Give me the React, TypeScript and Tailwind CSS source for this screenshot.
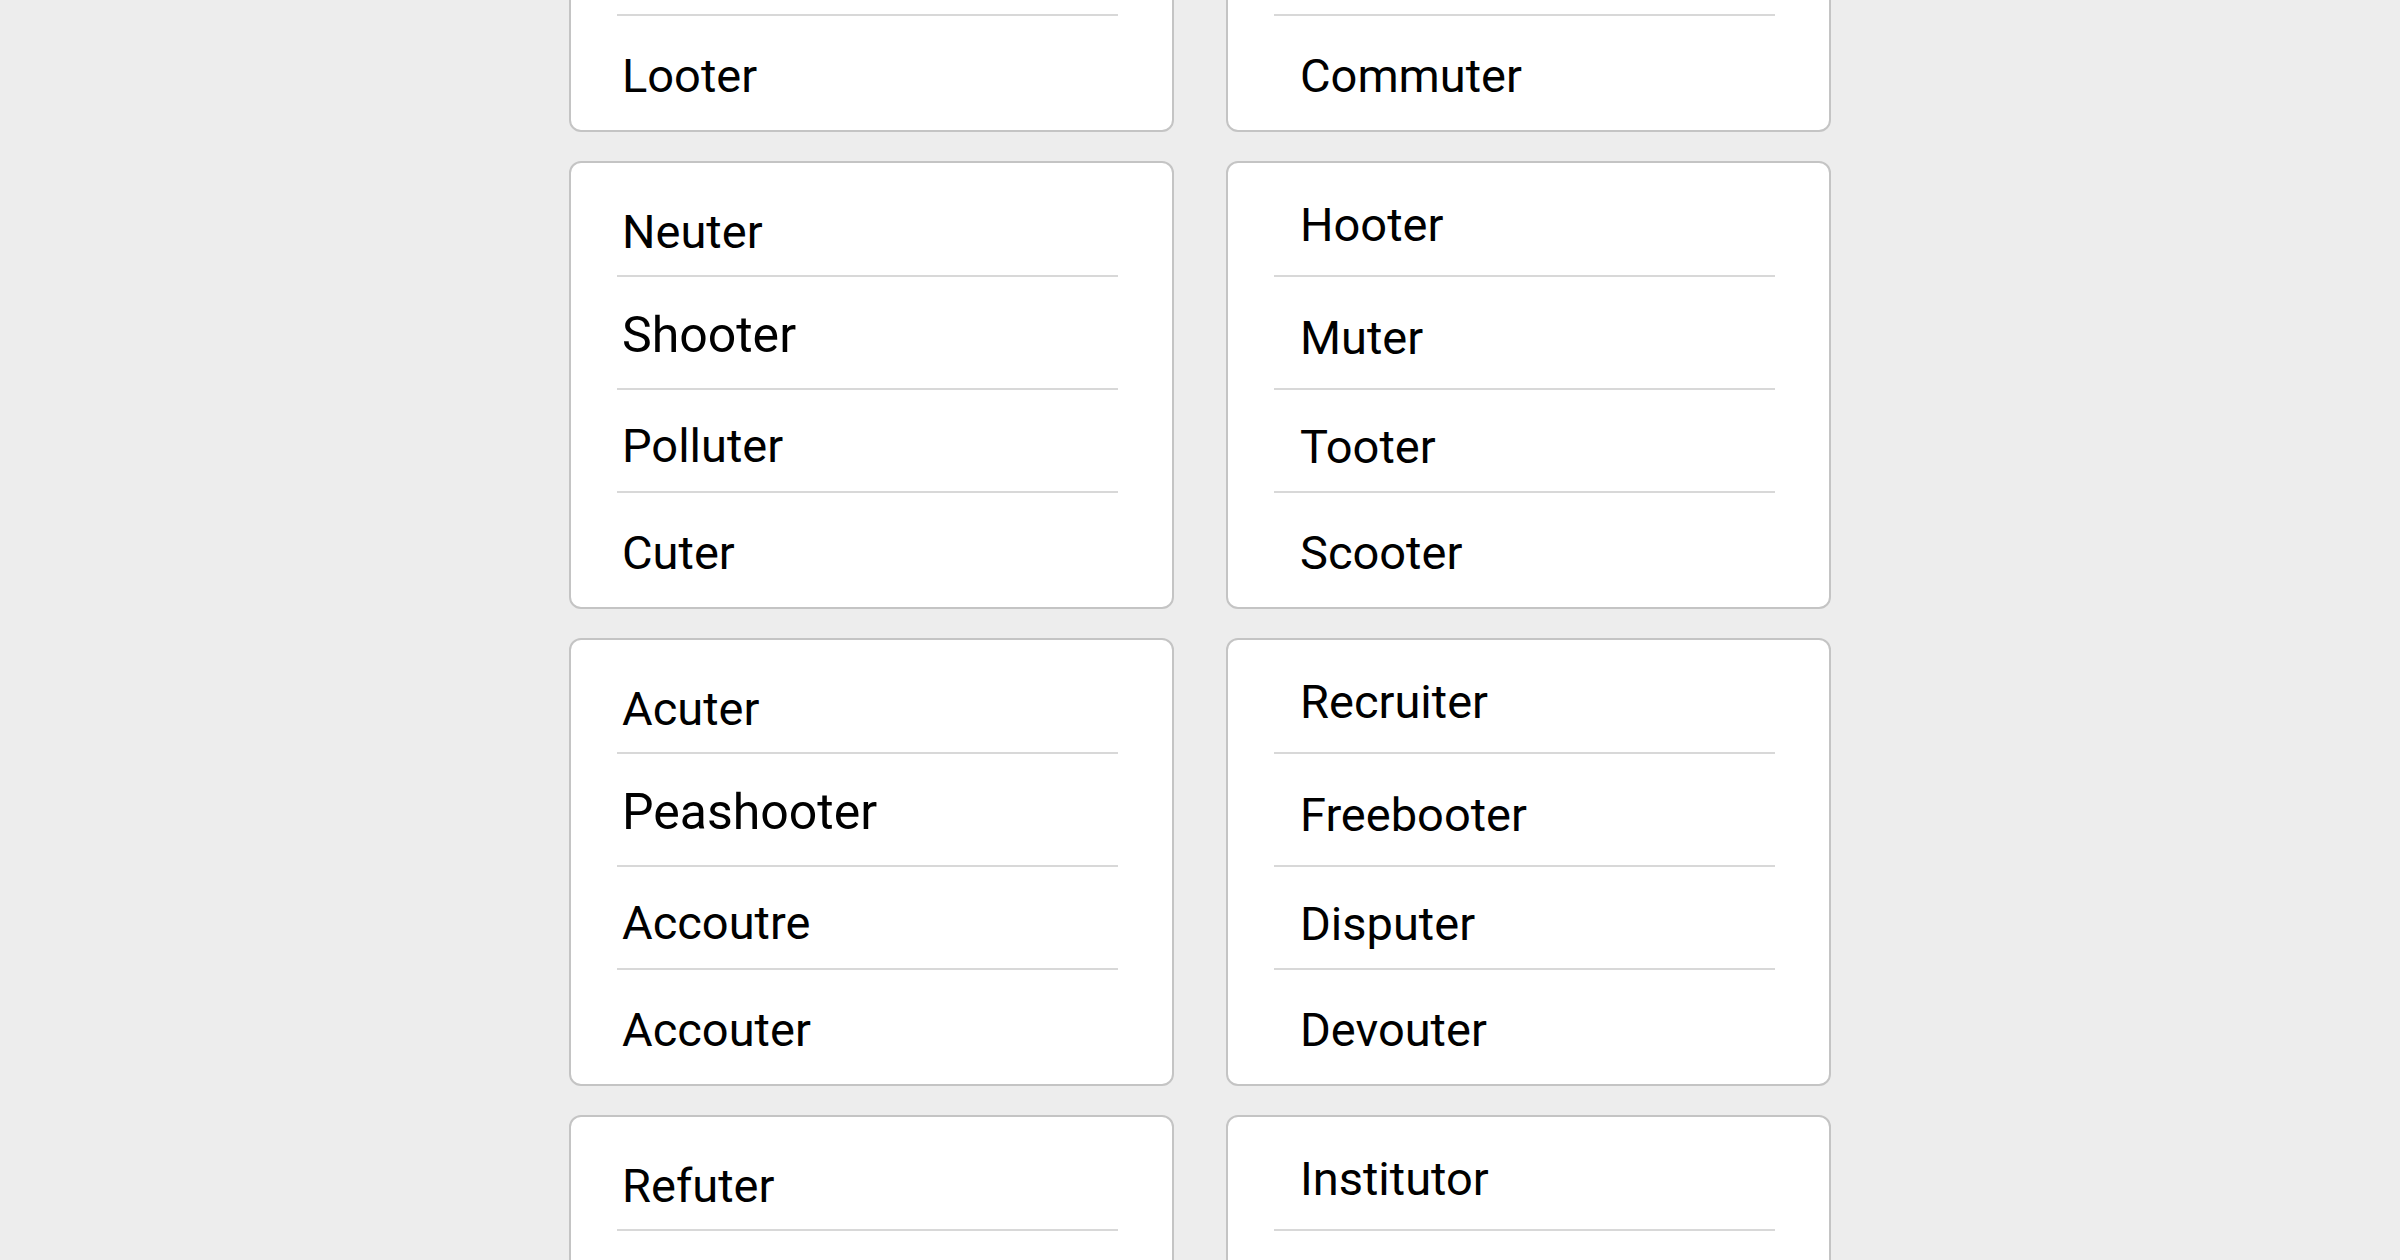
import React from 'react';

type Row = { h: string; pt: string; size: string };

// row heights / text offsets differ a little between the two columns
const leftRows: Row[] = [
  { h: 'h-[112px]', pt: 'pt-[45px]', size: 'text-[47px]' },
  { h: 'h-[111px]', pt: 'pt-[33px]', size: 'text-[50px]' },
  { h: 'h-[101px]', pt: 'pt-[32px]', size: 'text-[47px]' },
  { h: 'h-[114px]', pt: 'pt-[36px]', size: 'text-[47px]' },
];

const rightRows: Row[] = [
  { h: 'h-[112px]', pt: 'pt-[38px]', size: 'text-[47px]' },
  { h: 'h-[111px]', pt: 'pt-[37px]', size: 'text-[47px]' },
  { h: 'h-[101px]', pt: 'pt-[33px]', size: 'text-[47px]' },
  { h: 'h-[114px]', pt: 'pt-[36px]', size: 'text-[47px]' },
];

// rows scrolled out of view are left blank
const groups: [string[], string[]][] = [
  [
    ['', '', '', 'Looter'],
    ['', '', '', 'Commuter'],
  ],
  [
    ['Neuter', 'Shooter', 'Polluter', 'Cuter'],
    ['Hooter', 'Muter', 'Tooter', 'Scooter'],
  ],
  [
    ['Acuter', 'Peashooter', 'Accoutre', 'Accouter'],
    ['Recruiter', 'Freebooter', 'Disputer', 'Devouter'],
  ],
  [
    ['Refuter', '', '', ''],
    ['Institutor', '', '', ''],
  ],
];

const WordCard: React.FC<{ words: string[]; rows: Row[]; indent: string }> = ({ words, rows, indent }) => {
  return (
    <div className="bg-white border-2 border-[#c4c4c4] rounded-[12px]">
      {words.map((w, i) => (
        <React.Fragment key={i}>
          <div className={`${rows[i].h} ${rows[i].pt} ${indent}`}>
            {w && <span className={`block leading-none text-black ${rows[i].size}`}>{w}</span>}
          </div>
          {i < words.length - 1 && <div className="h-[2px] w-[501px] ml-[46px] bg-[#d8d8d8]" />}
        </React.Fragment>
      ))}
    </div>
  );
};

export default function App() {
  return (
    <div className="h-[1260px] overflow-hidden bg-[#ededed] font-['Roboto',sans-serif]">
      <div className="w-[1262px] mx-auto -mt-[316px] flex flex-col gap-[29px]">
        {groups.map(([left, right], i) => (
          <div key={i} className="grid grid-cols-2 gap-[52px]">
            <WordCard words={left} rows={leftRows} indent="pl-[51px]" />
            <WordCard words={right} rows={rightRows} indent="pl-[72px]" />
          </div>
        ))}
      </div>
    </div>
  );
}
